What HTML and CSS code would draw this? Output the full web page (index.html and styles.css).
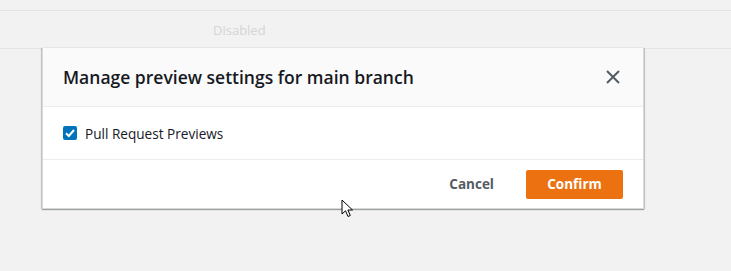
FILE: index.html
```html
<!DOCTYPE html>
<html>
<head>
<meta charset="utf-8">
<link rel="stylesheet" href="styles.css">
</head>
<body>
<div class="page">
  <div class="strip"></div>
  <div class="row"><span class="cell-muted">Disabled</span></div>
  <div class="modal">
    <div class="modal-header">
      <h2 class="modal-title">Manage preview settings for main branch</h2>
      <button class="close" aria-label="Close">
        <svg width="16" height="16" viewBox="0 0 16 16"><path d="M2 2 L14 14 M14 2 L2 14" stroke="#545b64" stroke-width="2" fill="none"/></svg>
      </button>
    </div>
    <div class="modal-body">
      <label class="check">
        <span class="box"><svg width="14" height="14" viewBox="0 0 14 14"><path d="M3 7.2 L5.8 10 L11 4" stroke="#fff" stroke-width="2" fill="none"/></svg></span>
        <span class="check-label">Pull Request Previews</span>
      </label>
    </div>
    <div class="modal-footer">
      <button class="btn-link">Cancel</button>
      <button class="btn-primary">Confirm</button>
    </div>
  </div>
  <svg class="cursor" width="14" height="20" viewBox="0 0 14 20"><path d="M1 1 L1 15 L4.5 11.8 L7 17.5 L9.3 16.5 L6.9 11 L11.5 11 Z" fill="#fff" stroke="#000" stroke-width="1"/></svg>
</div>
</body>
</html>
```
FILE: styles.css
```css
html, body { margin: 0; padding: 0; }
body {
  background: #f2f2f2;
  font-family: "Open Sans", "Noto Sans", sans-serif;
  width: 731px;
  height: 271px;
  overflow: hidden;
}
.page { position: relative; height: 271px; }
.strip { height: 10px; }
.row {
  border-top: 1px solid #e1e4e4;
  border-bottom: 1px solid #e1e4e4;
  height: 37px;
  display: flex;
  align-items: center;
  padding-left: 213px;
}
.cell-muted { color: #d5d5d5; font-size: 13px; }
.modal {
  position: absolute;
  left: 42px;
  top: 48px;
  width: 600px;
  background: #fff;
  border: 1px solid #d5dbdb;
  border-top: none;
  box-shadow: 0 1px 1px rgba(0,0,0,0.3), 1px 0 1px rgba(0,0,0,0.15), -1px 0 1px rgba(0,0,0,0.15);
}
.modal-header {
  background: #fafafa;
  height: 58px;
  border-bottom: 1px solid #eaeded;
  display: flex;
  align-items: center;
  justify-content: space-between;
  padding: 0 22px 0 20px;
}
.modal-title {
  margin: 0 0 1px;
  font-size: 17.5px;
  font-weight: 600;
  color: #16191f;
}
.close {
  background: none;
  border: none;
  padding: 0;
  width: 16px;
  height: 16px;
  display: flex;
}
.modal-body {
  height: 52px;
  border-bottom: 1px solid #eaeded;
  display: flex;
  align-items: center;
  padding-left: 20px;
}
.check { display: flex; align-items: center; gap: 8px; }
.box {
  width: 14px;
  height: 14px;
  background: #0073bb;
  border-radius: 2px;
  display: flex;
}
.check-label { font-size: 13.6px; color: #16191f; }
.modal-footer {
  height: 48px;
  display: flex;
  align-items: center;
  justify-content: flex-end;
  padding-right: 20px;
  gap: 32px;
}
.btn-link {
  background: none;
  border: none;
  font-family: inherit;
  font-size: 13.5px;
  font-weight: 700;
  color: #545b64;
  padding: 0;
}
.btn-primary {
  background: #ec7211;
  border: none;
  border-radius: 2px;
  width: 97px;
  height: 29px;
  color: #fff;
  font-family: inherit;
  font-size: 13.5px;
  font-weight: 700;
  padding: 0;
}
.cursor { position: absolute; left: 341px; top: 199px; }
```
